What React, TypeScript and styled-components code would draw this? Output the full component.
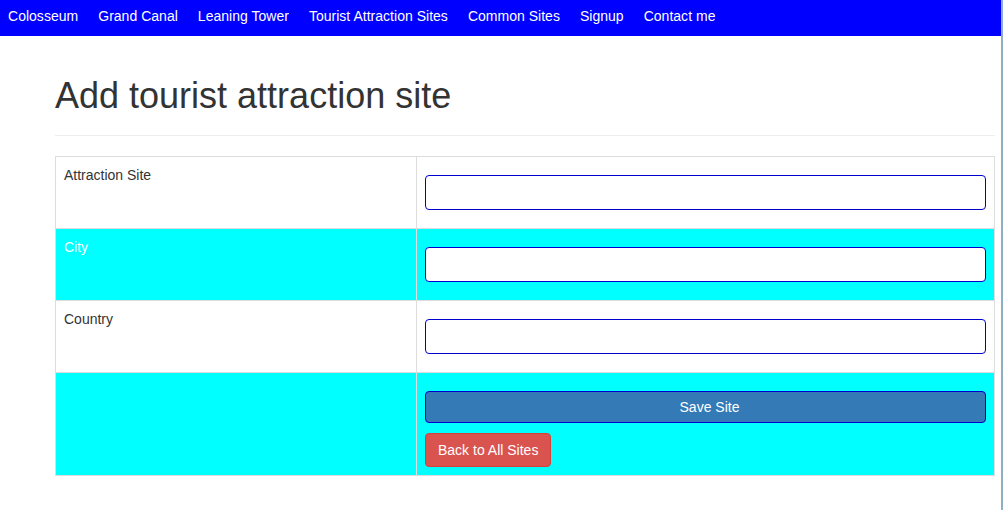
import React from "react";
import styled, { createGlobalStyle } from "styled-components";

const Global = createGlobalStyle`
  html, body { margin: 0; padding: 0; background: #fff; }
  body {
    font-family: "Liberation Sans", Arial, Helvetica, sans-serif;
    font-size: 14px;
    line-height: 1.42857;
    color: #333;
  }
  * { box-sizing: border-box; }
`;

const Frame = styled.div`
  display: flex;
  width: 1003px;
  min-height: 510px;
`;

const Page = styled.div`
  width: 1001px;
  flex: none;
`;

const Edge = styled.div`
  width: 2px;
  flex: none;
  background: #8fb0c4;
`;

const NavBar = styled.nav`
  height: 36px;
  background: #0000ff;
  display: flex;
  align-items: center;
  padding: 0 8px;
`;

const NavLink = styled.a`
  color: #fff;
  text-decoration: none;
  font-size: 14px;
  line-height: 20px;
  margin-top: -4px;
  margin-right: 20px;
  letter-spacing: 0.02px;
`;

const Container = styled.div`
  width: 940px;
  margin-left: 55px;
`;

const Heading = styled.h1`
  margin: 40px 0 0;
  font-size: 36px;
  font-weight: 500;
  line-height: 1.1;
  color: #333;
  padding-bottom: 19px;
  border-bottom: 1px solid #eee;
`;

const Table = styled.table`
  margin-top: 20px;
  width: 940px;
  border-collapse: collapse;
  border: 1px solid #ddd;
`;

const Row = styled.tr<{ $alt?: boolean }>`
  background: ${(p) => (p.$alt ? "#00ffff" : "#fff")};
`;

const LabelCell = styled.td<{ $light?: boolean }>`
  width: 361px;
  padding: 8px;
  vertical-align: top;
  border: 1px solid #ddd;
  color: ${(p) => (p.$light ? "#fff" : "#333")};
  line-height: 20px;
  height: 72px;
`;

const FieldCell = styled.td`
  padding: 8px;
  vertical-align: top;
  border: 1px solid #ddd;
`;

const Input = styled.input`
  display: block;
  width: 100%;
  height: 35px;
  margin-top: 10px;
  margin-bottom: 10px;
  border: 1px solid #0000cd;
  border-radius: 4px;
  background: #fff;
  padding: 6px 12px;
  font-size: 14px;
  font-family: inherit;
`;

const SaveButton = styled.button`
  display: block;
  width: 100%;
  height: 32px;
  margin-top: 10px;
  background: #337ab7;
  border: 1px solid #0000cd;
  border-radius: 4px;
  color: #fff;
  font-family: inherit;
  font-size: 14px;
  line-height: 20px;
  padding: 0 0 0 8px;
`;

const BackButton = styled.a`
  display: inline-block;
  margin-top: 10px;
  padding: 6px 12px;
  height: 34px;
  background: #d9534f;
  border: 1px solid #d43f3a;
  border-radius: 4px;
  color: #fff;
  text-decoration: none;
  font-size: 14px;
  line-height: 20px;
`;

const navItems = [
  "Colosseum",
  "Grand Canal",
  "Leaning Tower",
  "Tourist Attraction Sites",
  "Common Sites",
  "Signup",
  "Contact me",
];

const fields = ["Attraction Site", "City", "Country"];

export default function App() {
  return (
    <>
      <Global />
      <Frame>
        <Page>
          <NavBar>
            {navItems.map((n) => (
              <NavLink key={n} href="#">
                {n}
              </NavLink>
            ))}
          </NavBar>
          <Container>
            <Heading>Add tourist attraction site</Heading>
            <Table>
              <tbody>
                {fields.map((f, i) => (
                  <Row key={f} $alt={i % 2 === 1}>
                    <LabelCell $light={i % 2 === 1}>{f}</LabelCell>
                    <FieldCell>
                      <Input type="text" />
                    </FieldCell>
                  </Row>
                ))}
                <Row $alt>
                  <LabelCell $light />
                  <FieldCell>
                    <SaveButton type="button">Save Site</SaveButton>
                    <BackButton href="#">Back to All Sites</BackButton>
                  </FieldCell>
                </Row>
              </tbody>
            </Table>
          </Container>
        </Page>
        <Edge />
      </Frame>
    </>
  );
}
